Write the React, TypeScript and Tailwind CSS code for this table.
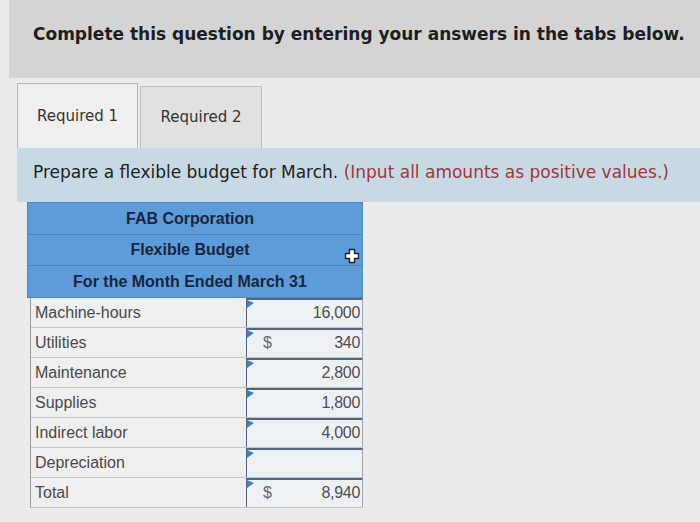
import React from "react";

const rows: { label: string; dollar?: boolean; value: string }[] = [
  { label: "Machine-hours", value: "16,000" },
  { label: "Utilities", dollar: true, value: "340" },
  { label: "Maintenance", value: "2,800" },
  { label: "Supplies", value: "1,800" },
  { label: "Indirect labor", value: "4,000" },
  { label: "Depreciation", value: "" },
  { label: "Total", dollar: true, value: "8,940" },
];

function Corner() {
  return (
    <svg className="absolute left-0 top-0" width="7" height="8" viewBox="0 0 7 8">
      <polygon points="0,0 7,3 0,8" fill="#3b7fc6" />
    </svg>
  );
}

export default function App() {
  return (
    <div className="w-[700px] h-[522px] overflow-hidden bg-[#ebebeb] pl-[9px]" style={{ fontFamily: '"Liberation Sans", Arial, sans-serif' }}>
      <div className="h-[78px] bg-[#d4d4d4] pl-[24px] pt-[22px]">
        <div className="text-[17px] font-bold text-[#1e1e1e]" style={{ fontFamily: '"DejaVu Sans", Verdana, sans-serif' }}>
          Complete this question by entering your answers in the tabs below.
        </div>
      </div>
      <div className="flex pl-[8px] pt-[5px]">
        <div className="w-[121px] h-[65px] border border-b-0 border-[#b5b5b5] bg-[#efefef] flex items-center justify-center text-[15px] text-[#333]" style={{ fontFamily: '"DejaVu Sans", Verdana, sans-serif' }}>
          Required 1
        </div>
        <div className="w-[122px] h-[62px] mt-[3px] ml-[2px] border border-b-0 border-[#bdbdbd] bg-[#e1e1e1] flex items-center justify-center text-[15px] text-[#333]" style={{ fontFamily: '"DejaVu Sans", Verdana, sans-serif' }}>
          Required 2
        </div>
      </div>
      <div className="ml-[8px] h-[54px] bg-[#c9d9e3] pl-[16px] pt-[12px] text-[17px] text-[#222]" style={{ fontFamily: '"DejaVu Sans", Verdana, sans-serif' }}>
        Prepare a flexible budget for March. <span className="text-[#9b3a3a]">(Input all amounts as positive values.)</span>
      </div>
      <div className="ml-[18px] w-[336px]">
        <div className="relative bg-[#5d9cd9] border border-[#4a86c0] text-[#17263f] font-bold text-[16px]">
          <div className="h-[32px] flex items-center justify-center border-b border-[#4a86c0] pr-[10px]">FAB Corporation</div>
          <div className="h-[31px] flex items-center justify-center border-b border-[#4a86c0] pr-[10px]">Flexible Budget</div>
          <div className="h-[31px] flex items-center justify-center pr-[10px]">For the Month Ended March 31</div>
          <svg className="absolute right-[2px] top-[45px]" width="16" height="16" viewBox="0 0 16 16">
            <path d="M5.5 1.5h5v4h4v5h-4v4h-5v-4h-4v-5h4z" fill="#ffffff" stroke="#1c2433" strokeWidth="1.4" />
          </svg>
        </div>
        <div className="ml-[3px] border-l border-[#9a9a9a] bg-[#efefef]">
          {rows.map((r, i) => (
            <div key={i} className="flex h-[30px] border-b border-[#c4c4c4]">
              <div className="flex-1 pl-[4px] pt-[3px] text-[16px] text-[#4a4a4a]">{r.label}</div>
              <div className="relative w-[117px] border-t-2 border-l border-r border-[#55657a] border-r-[#9aa6b2] bg-[#eef1f4] flex items-end justify-between pb-[2px] pl-[16px] pr-[2px] text-[16px] text-[#4d4d4d] tracking-[-0.3px]">
                <Corner />
                <span className="text-[#666]">{r.dollar ? "$" : ""}</span>
                <span>{r.value}</span>
              </div>
            </div>
          ))}
        </div>
      </div>
    </div>
  );
}
